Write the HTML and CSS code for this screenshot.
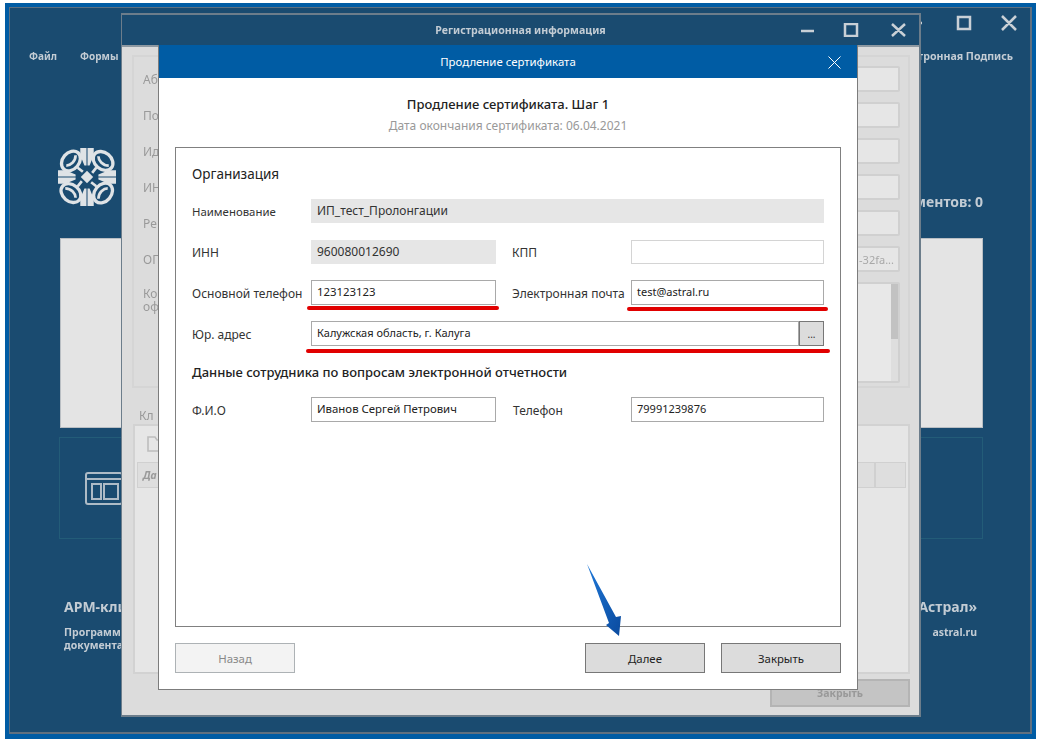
FILE: index.html
```html
<!DOCTYPE html>
<html lang="ru">
<head>
<meta charset="utf-8">
<title>Продление сертификата</title>
<link rel="stylesheet" href="styles.css">
</head>
<body>
<div class="screen">
  <div class="frame">
    <div class="app">
      <div class="app-title">
        <svg class="ctl" width="110" height="16" viewBox="0 0 110 16"><path d="M0 8h14M50 2h12v12H50zM94 1l14 14M108 1L94 15" fill="none" stroke="#c9d0d6" stroke-width="2.5"/></svg>
      </div>
      <div class="menu">
        <div class="menu-left"><span>Файл</span><span>Формы</span></div>
        <span class="menu-right">Электронная Подпись</span>
      </div>
      <div class="brand">
        <svg class="logo" width="58" height="58" viewBox="0 0 56 56">
          <defs>
            <g id="q">
              <path d="M27.5 0h-6v7l4 10h2zM0 27.5v-6h7l10 4v2z" fill="#dfe3e6"/>
              <ellipse cx="12.5" cy="12.5" rx="10.5" ry="8" transform="rotate(-50 12.5 12.5)" fill="none" stroke="#dfe3e6" stroke-width="3.2"/>
              <path d="M8 17C12 17 17 13 17 7M19 19l5 4" fill="none" stroke="#dfe3e6" stroke-width="2.6"/>
            </g>
          </defs>
          <use href="#q"/>
          <use href="#q" transform="rotate(90 28 28)"/>
          <use href="#q" transform="rotate(180 28 28)"/>
          <use href="#q" transform="rotate(270 28 28)"/>
          <path d="M28 22l6 6-6 6-6-6z" fill="#dfe3e6"/>
        </svg>
        <span class="docs">Документов: 0</span>
      </div>
      <div class="panel"></div>
      <div class="tile">
        <svg width="38" height="34" viewBox="0 0 38 34"><g fill="none" stroke="#aebbc6" stroke-width="2"><rect x="1" y="1" width="36" height="31" rx="2"/><path d="M1 7h36"/><rect x="7" y="12" width="9" height="15"/><rect x="19" y="12" width="14" height="15"/></g></svg>
      </div>
      <div class="foot">
        <div class="foot-left">
          <div class="foot-head">АРМ-клиент</div>
          <div class="foot-text">Программа для обмена<br>документами</div>
        </div>
        <div class="foot-right">
          <div class="foot-head">ООО «Астрал»</div>
          <div class="foot-text">astral.ru</div>
        </div>
      </div>
    </div>
  </div>

  <div class="regwin">
    <div class="reg-title">
      <span class="reg-name">Регистрационная информация</span>
      <svg class="reg-ctl" width="106" height="14" viewBox="0 0 106 14"><path d="M0 8h13M44 1h12v12H44zM91 1l13 12M104 1L91 13" fill="none" stroke="#c9d0d6" stroke-width="2.5"/></svg>
    </div>
    <div class="reg-body">
      <div class="reg-group">
        <div class="reg-row"><span class="reg-label">Аб</span><div class="reg-field"></div></div>
        <div class="reg-row"><span class="reg-label">По</span><div class="reg-field"></div></div>
        <div class="reg-row"><span class="reg-label">Ид</span><div class="reg-field"></div></div>
        <div class="reg-row"><span class="reg-label">ИН</span><div class="reg-field"></div></div>
        <div class="reg-row"><span class="reg-label">Ре</span><div class="reg-field"></div></div>
        <div class="reg-row"><span class="reg-label">ОГ</span><div class="reg-field reg-value">-32fa...</div></div>
        <div class="reg-row reg-row-tall"><span class="reg-label">Ко<br>оф</span><div class="reg-field reg-area"><div class="reg-scroll"><div class="reg-thumb"></div></div></div></div>
      </div>
      <div class="reg-keys-label">Кл</div>
      <div class="reg-keys">
        <svg class="reg-folder" width="22" height="16" viewBox="0 0 22 16"><path d="M1 15V1h7l2 3h11v11z" fill="none" stroke="#bdbdbd" stroke-width="1.6"/></svg>
        <div class="reg-table-head"><span class="reg-col-a">Да</span><span class="reg-col-b"></span><span class="reg-col-c"></span></div>
      </div>
      <div class="reg-foot"><span class="reg-close">Закрыть</span></div>
    </div>
  </div>

  <div class="dialog">
    <div class="dlg-head">
      <span>Продление сертификата</span>
      <svg class="dlg-x" width="13" height="13" viewBox="0 0 13 13"><path d="M.5.5l12 12M12.5.5l-12 12" stroke="#fff" fill="none"/></svg>
    </div>
    <div class="dlg-body">
      <div class="dlg-heading">Продление сертификата. Шаг 1</div>
      <div class="dlg-sub">Дата окончания сертификата: 06.04.2021</div>
      <div class="box">
        <div class="sect sect1">Организация</div>
        <div class="rows">
          <div class="row r24">
            <span class="lbl lbl-tight">Наименование</span>
            <div class="fld ro wide">ИП_тест_Пролонгации</div>
          </div>
          <div class="row r24">
            <span class="lbl">ИНН</span>
            <div class="fld ro short">960080012690</div>
            <span class="lbl lbl2">КПП</span>
            <div class="fld empty long"></div>
          </div>
          <div class="row">
            <span class="lbl">Основной телефон</span>
            <div class="fld short">123123123</div>
            <span class="lbl lbl2">Электронная почта</span>
            <div class="fld long tight">test@astral.ru</div>
          </div>
          <div class="row">
            <span class="lbl">Юр. адрес</span>
            <div class="fld addr">Калужская область, г. Калуга</div>
            <div class="more">...</div>
          </div>
        </div>
        <div class="sect sect2">Данные сотрудника по вопросам электронной отчетности</div>
        <div class="row">
          <span class="lbl">Ф.И.О</span>
          <div class="fld short">Иванов Сергей Петрович</div>
          <span class="lbl lbl2 lbl3">Телефон</span>
          <div class="fld long tight">79991239876</div>
        </div>
      </div>
      <div class="actions">
        <button class="btn off" type="button">Назад</button>
        <div class="actions-right">
          <button class="btn" type="button">Далее</button>
          <button class="btn" type="button">Закрыть</button>
        </div>
      </div>
    </div>
  </div>

  <div class="mark m1"></div>
  <div class="mark m2"></div>
  <div class="mark m3"></div>
  <svg class="arrow" width="36" height="74" viewBox="0 0 36 74">
    <defs><linearGradient id="ag" x1="0" y1="0" x2="1" y2="1"><stop offset="0" stop-color="#1f78d8"/><stop offset="1" stop-color="#0a4a9e"/></linearGradient></defs>
    <path d="M1 1L30 54l5-1-2 20-13-11 3-2z" fill="url(#ag)"/>
  </svg>
</div>
</body>
</html>
```
FILE: styles.css
```css
* { box-sizing: border-box; }
html, body { margin: 0; padding: 0; background: #fff; overflow: hidden; }
body { font-family: "Noto Sans", "Open Sans", sans-serif; font-size: 12px; color: #222; }

.screen { position: relative; width: 1041px; height: 743px; overflow: hidden; }

/* Background application */
.frame { margin: 3px 5px 0; width: 1031px; height: 736px; padding: 4px 4px 5px; background: #005ca4; }
.app { height: 100%; border: 1px solid #5f7080; border-width: 1px 2px 2px 1px; background: #1a4b70; color: #c3ccd4; filter: blur(.45px); display: flex; flex-direction: column; }
.app-title { height: 32px; padding: 7px 12px 0 0; display: flex; justify-content: flex-end; flex: none; }
.menu { margin-top: 8px; height: 16px; padding: 0 17px 0 19px; display: flex; justify-content: space-between; align-items: center; font-size: 10px; font-weight: 700; flex: none; }
.menu-left { display: flex; gap: 23px; }
.menu-right { font-size: 10.6px; }
.brand { margin-top: 84px; height: 58px; padding: 0 47px 0 48px; display: flex; justify-content: space-between; align-items: flex-end; flex: none; }
.docs { font-size: 14px; font-weight: 700; line-height: 20px; margin-bottom: -6px; }
.panel { margin: 32px 47px 0 50px; height: 190px; background: #e4e4e4; border: 1px solid #b9bec3; flex: none; }
.tile { margin: 9px 47px 0 49px; height: 102px; border: 1px solid #235c78; padding: 34px 0 0 25px; flex: none; }
.foot { margin-top: 59px; padding: 0 53px 0 54px; display: flex; justify-content: space-between; flex: none; }
.foot-head { font-size: 14px; font-weight: 700; line-height: 18px; }
.foot-text { margin-top: 10px; font-size: 10.5px; font-weight: 700; line-height: 13px; }
.foot-right { text-align: right; }

/* Registration window */
.regwin { position: absolute; left: 121px; top: 13px; width: 800px; height: 704px; border: 2px solid #6c7d8b; border-width: 2px 2px 2px 1px; background: #dcdcdc; display: flex; flex-direction: column; }
.reg-title { height: 30px; background: #1a4b70; color: #c3ccd4; position: relative; display: flex; justify-content: center; align-items: center; flex: none; filter: blur(.45px); }
.reg-name { font-size: 10.6px; font-weight: 700; }
.reg-ctl { position: absolute; right: 12px; top: 8px; }
.reg-body { flex: 1; padding: 8px 9px 0 10px; display: flex; flex-direction: column; color: #9a9a9a; border-top: 2px solid #8e99a2; filter: blur(.45px); }
.reg-group { height: 333px; border: 2px solid #d5d5d5; padding: 9px 8px 0 9px; display: flex; flex-direction: column; gap: 10px; flex: none; }
.reg-row { display: flex; height: 26px; align-items: center; }
.reg-row-tall { height: 101px; align-items: flex-start; }
.reg-label { width: 15px; margin-right: 115px; font-size: 12px; line-height: 13px; color: #9a9a9a; flex: none; }
.reg-row-tall .reg-label { padding-top: 5px; }
.reg-field { flex: 1; height: 26px; background: #e6e6e6; border: 2px solid #d0d0d0; border-radius: 2px; }
.reg-value { text-align: right; padding: 3px 4px; line-height: 17px; font-size: 11px; color: #a8a8a8; }
.reg-area { height: 101px; position: relative; background: #e8e8e8; }
.reg-scroll { position: absolute; right: 0; top: 0; bottom: 0; width: 7px; background: #dedede; }
.reg-thumb { height: 55px; background: #c2c2c2; }
.reg-keys-label { margin-top: 20px; padding-left: 7px; height: 16px; line-height: 16px; color: #9a9a9a; flex: none; }
.reg-keys { margin-left: 1px; height: 250px; border: 2px solid #d2d2d2; background: #e6e6e6; padding: 10px 2px 0; flex: none; }
.reg-folder { display: block; margin-left: 10px; }
.reg-table-head { margin-top: 10px; height: 26px; background: #dedede; border: 1px solid #d0d0d0; display: flex; line-height: 24px; font-size: 10.5px; font-weight: 700; font-style: italic; }
.reg-col-a { flex: 1; padding-left: 5px; }
.reg-col-b { width: 1px; }
.reg-col-c { width: 31px; border-left: 2px solid #d0d0d0; }
.reg-foot { margin-top: 5px; display: flex; justify-content: flex-end; }
.reg-close { width: 140px; height: 28px; background: #c4c4c4; border: 2px solid #b4b4b4; text-align: center; line-height: 24px; font-size: 10.5px; font-weight: 700; color: #999; }

/* Dialog */
.dialog { position: absolute; left: 158px; top: 45px; width: 700px; height: 645px; background: #fff; border: 1px solid #7c7c7c; border-top: 0; display: flex; flex-direction: column; }
.dlg-head { height: 33px; background: #005ca4; color: #fff; display: flex; align-items: center; justify-content: center; position: relative; font-size: 11.4px; flex: none; }
.dlg-x { position: absolute; right: 16px; top: 11px; }
.dlg-body { flex: 1; padding: 17px 16px 16px; display: flex; flex-direction: column; }
.dlg-heading { text-align: center; font-size: 13px; line-height: 18px; font-weight: 500; color: #222; }
.dlg-sub { text-align: center; margin-top: 4px; font-size: 12px; line-height: 17px; color: #999; }
.box { margin-top: 13px; width: 666px; height: 480px; border: 1px solid #808080; padding: 16px 16px 0; }
.sect { font-size: 13px; line-height: 20px; font-weight: 500; color: #222; }
.sect1 { font-size: 13.5px; font-weight: 400; }
.rows { margin-top: 15px; display: flex; flex-direction: column; gap: 16px; }
.sect2 { margin-top: 16px; }
.sect2 + .row { margin-top: 15px; }
.row { display: flex; height: 25px; align-items: center; }
.r24 { height: 24px; }
.rows .r24:first-child { margin-bottom: 1px; }
.lbl { width: 119px; flex: none; color: #333; white-space: nowrap; padding-top: 2px; }
.r24 .lbl { padding-top: 0; }
.lbl-tight { font-size: 11.4px; }
.lbl2 { margin-left: 16px; }
.lbl3 { padding-left: 1px; }
.fld { height: 100%; border: 1px solid #a9a9a9; padding: 0 5px; line-height: 22px; font-size: 11.4px; color: #222; white-space: nowrap; background: #fff; flex: none; }
.fld.ro { background: #e6e6e6; border-color: #e6e6e6; color: #333; font-size: 12px; }
.fld.empty { border-color: #d4d4d4; }
.fld.tight { font-size: 11px; }
.wide { width: 513px; }
.short { width: 185px; }
.long { width: 193px; }
.fld.addr { width: 488px; font-size: 11px; }
.more { width: 25px; height: 25px; background: #dcdcdc; border: 1px solid #777; text-align: center; line-height: 24px; font-size: 10px; color: #333; flex: none; }
.actions { margin-top: 16px; width: 666px; display: flex; justify-content: space-between; }
.actions-right { display: flex; gap: 16px; }
.btn { width: 120px; height: 30px; padding: 0; font-family: inherit; font-size: 11.4px; background: #dcdcdc; border: 1px solid #777; color: #222; }
.btn.off { background: #f3f3f3; border-color: #adb2b5; color: #888; }

/* Annotations drawn over the screenshot */
.mark { position: absolute; height: 4px; background: #e10000; border-radius: 2px; }
.m1 { left: 307px; top: 306px; width: 192px; }
.m2 { left: 627px; top: 307px; width: 201px; }
.m3 { left: 306px; top: 349px; width: 524px; }
.arrow { position: absolute; left: 586px; top: 563px; }
```
